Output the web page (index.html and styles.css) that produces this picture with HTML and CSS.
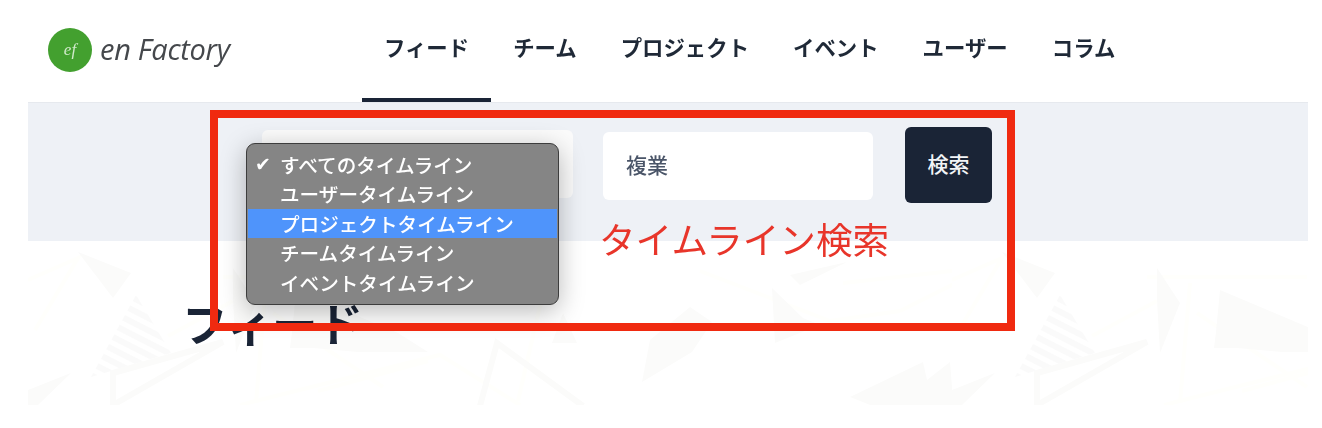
FILE: index.html
```html
<!DOCTYPE html>
<html lang="ja">
<head>
<meta charset="utf-8">
<title>en Factory フィード</title>
<link rel="stylesheet" href="styles.css">
</head>
<body>
<div class="page">
  <header class="header">
    <a class="logo" href="#">
      <span class="logo-mark">ef</span>
      <span class="logo-text">en Factory</span>
    </a>
    <nav class="nav">
      <a class="nav-item is-active" href="#">フィード</a>
      <a class="nav-item" href="#">チーム</a>
      <a class="nav-item" href="#">プロジェクト</a>
      <a class="nav-item" href="#">イベント</a>
      <a class="nav-item" href="#">ユーザー</a>
      <a class="nav-item" href="#">コラム</a>
    </nav>
  </header>

  <section class="filter">
    <div class="select-box"></div>
    <input class="search-input" type="text" value="複業">
    <button class="search-button" type="button">検索</button>
  </section>

  <section class="hero">
    <svg class="hero-pattern" xmlns="http://www.w3.org/2000/svg" aria-hidden="true">
      <defs>
        <pattern id="stripes" width="10" height="11" patternUnits="userSpaceOnUse" patternTransform="rotate(27)">
          <rect width="10" height="6" fill="#fafafa"/>
        </pattern>
        <pattern id="tile" width="924" height="164" patternUnits="userSpaceOnUse">
          <g class="cream">
            <path d="M0 39 50 17 7 89"/>
            <path d="M195 36H355"/>
            <path d="M238 42 228 162"/>
            <path d="M245 72 355 146"/>
            <path d="M815 42 959 26 872 70"/>
            <path d="M520 30 490 160"/>
            <path d="M672 30 802 80 872 70"/>
            <path d="M212 164 412 114 492 164"/>
            <path d="M140 95 205 60"/>
            <path d="M290 150 400 120"/>
          </g>
          <g class="gray">
            <polygon points="50,11 103,32 85,57"/>
            <polygon points="205,27 228,62 208,112 205,59"/>
            <polygon points="268,49 370,92 400,111 330,111 285,107 262,107 264,91"/>
            <polygon points="535,72 524,102 549,102"/>
            <polygon points="662,66 684,81 664,111 614,141 622,99"/>
            <polygon points="744,47 775,77 792,84 747,102"/>
            <polygon points="762,34 819,21 772,44"/>
            <polygon points="822,156 895,121 899,139 922,121 924,146 924,164 842,164"/>
            <polygon points="0,149 43,132 10,164 0,164"/>
          </g>
          <polygon points="108,54 143,112 63,136" fill="url(#stripes)"/>
          <g class="outline">
            <polygon points="85,132 195,101 85,164"/>
            <polyline points="452,165 469,102 555,165"/>
          </g>
        </pattern>
      </defs>
      <rect width="100%" height="100%" fill="url(#tile)"/>
    </svg>
    <h1 class="hero-title">フィード</h1>
  </section>

  <ul class="menu">
    <li class="menu-item is-checked">すべてのタイムライン</li>
    <li class="menu-item">ユーザータイムライン</li>
    <li class="menu-item is-hover">プロジェクトタイムライン</li>
    <li class="menu-item">チームタイムライン</li>
    <li class="menu-item">イベントタイムライン</li>
  </ul>
  <div class="callout"></div>
  <p class="callout-label">タイムライン検索</p>
</div>
</body>
</html>
```

FILE: styles.css
```css
* {
  box-sizing: border-box;
}

html,
body {
  margin: 0;
  padding: 0;
  background: #fff;
  overflow: hidden;
}

body {
  font-family: "Noto Sans CJK JP", "Noto Sans", sans-serif;
  color: #1a2436;
}

.page {
  position: relative;
  width: 1280px;
  margin-left: 28px;
  filter: blur(0.35px);
}

.header {
  display: flex;
  height: 102px;
}

.logo {
  display: flex;
  align-items: center;
  gap: 8px;
  width: 334px;
  height: 100px;
  padding-left: 20px;
  text-decoration: none;
}

.logo-mark {
  display: flex;
  align-items: center;
  justify-content: center;
  width: 44px;
  height: 44px;
  border-radius: 50%;
  background: #43a02f;
  color: #cfe9c9;
  font-family: "Liberation Serif", serif;
  font-style: italic;
  font-size: 17px;
}

.logo-text {
  margin-top: -3px;
  font-family: "Open Sans", sans-serif;
  font-style: italic;
  font-size: 29px;
  letter-spacing: -0.3px;
  color: #45484c;
}

.nav {
  display: flex;
}

.nav-item {
  display: flex;
  align-items: center;
  height: 102px;
  padding: 0 22px 6px;
  border-bottom: 4px solid transparent;
  color: #1f2937;
  font-size: 21.4px;
  font-weight: 600;
  text-decoration: none;
}

.nav-item.is-active {
  border-bottom-color: #1a2436;
}

.filter {
  display: flex;
  align-items: flex-start;
  height: 139px;
  padding: 24px 0 0 234px;
  border-top: 1px solid #e6e9ee;
  background: #eef1f6;
}

.select-box {
  width: 311px;
  height: 68px;
  margin-top: 3px;
  margin-right: 30px;
  border-radius: 6px;
  background: #fbfbfb;
}

.search-input {
  width: 270px;
  height: 68px;
  margin-top: 5px;
  margin-right: 32px;
  padding: 0 23px 5px;
  border: 0;
  border-radius: 6px;
  background: #fff;
  color: #4a5568;
  font-family: inherit;
  font-size: 21px;
  font-weight: 500;
}

.search-button {
  width: 87px;
  height: 76px;
  padding: 0 0 5px;
  border: 0;
  border-radius: 6px;
  background: #1a2436;
  color: #f2f4f7;
  font-family: inherit;
  font-size: 21px;
  font-weight: 500;
}

.hero {
  position: relative;
  height: 164px;
  padding: 53px 0 0 154px;
}

.hero-pattern {
  position: absolute;
  top: 0;
  left: 0;
  width: 100%;
  height: 100%;
}

.cream path {
  fill: none;
  stroke: #fffffc;
  stroke-width: 4;
}

.gray polygon {
  fill: #fbfbfa;
}

.outline polygon,
.outline polyline {
  fill: none;
  stroke: #fbfbfa;
  stroke-width: 6;
}

.hero-title {
  position: relative;
  margin: 0;
  color: #1a2436;
  font-size: 45.5px;
  font-weight: 600;
  line-height: 56px;
}

.menu {
  position: absolute;
  top: 143px;
  left: 218px;
  width: 313px;
  height: 162px;
  margin: 0;
  padding: 5.5px 1px;
  border: 1px solid #3d3d3d;
  border-radius: 9px;
  background: #858585;
  box-shadow: 0 6px 26px rgba(0, 0, 0, 0.28);
  list-style: none;
}

.menu-item {
  position: relative;
  height: 29.6px;
  padding-left: 32px;
  color: #fff;
  font-size: 19.6px;
  font-weight: 500;
  line-height: 29.6px;
  white-space: nowrap;
}

.menu-item.is-hover {
  background: #4f94fb;
}

.menu-item.is-checked::before {
  content: "✔";
  position: absolute;
  left: 7px;
  font-family: "DejaVu Sans", sans-serif;
  font-size: 19px;
  font-weight: 400;
}

.callout {
  position: absolute;
  top: 110px;
  left: 182px;
  width: 805px;
  height: 221px;
  border: 8px solid #f02a10;
}

.callout-label {
  position: absolute;
  top: 213px;
  left: 571px;
  margin: 0;
  color: #e8352a;
  font-size: 36.6px;
  font-weight: 400;
  line-height: 52px;
  white-space: nowrap;
}
```
